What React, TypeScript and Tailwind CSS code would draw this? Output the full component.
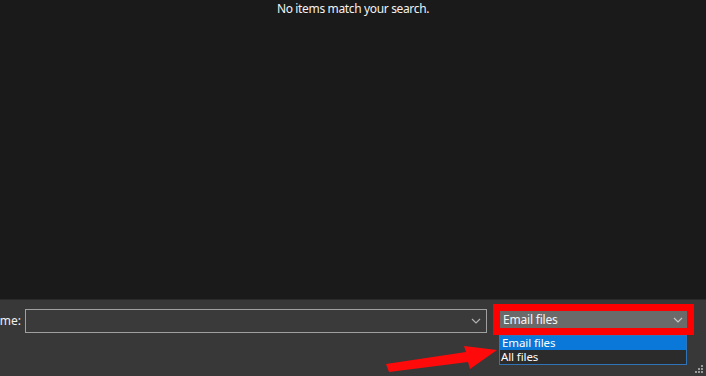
import React from "react";

const Chevron = ({ color = "#b0b0b0" }: { color?: string }) => (
  <svg width="10" height="6" viewBox="0 0 10 6" className="block">
    <polyline points="1,1 5,5 9,1" fill="none" stroke={color} strokeWidth="1.2" />
  </svg>
);

export default function App() {
  const font = { fontFamily: '"Noto Sans", "Open Sans", sans-serif' };
  return (
    <div className="relative w-[706px] h-[376px] overflow-hidden bg-[#383838] text-[12px] text-white" style={font}>
      <div className="h-[300px] bg-[#1a1a1a] border-b border-[#2a2a2a] flex justify-center">
        <div className="mt-[1px] leading-[16px] text-[12px] text-[#f2f2f2] tracking-[-0.35px]">No items match your search.</div>
      </div>
      <div className="h-[75px] flex items-start">
        <div className="mt-[9px] flex items-center h-[24px]">
          <div className="w-[21px] overflow-hidden flex justify-end">
            <span className="whitespace-nowrap text-[#f0f0f0] leading-[16px]">File name:</span>
          </div>
          <div className="ml-[4px] w-[462px] h-[24px] border border-[#a0a0a0] bg-[#3a3a3a] flex items-center justify-end pr-[5px]">
            <Chevron />
          </div>
        </div>
        <div className="relative ml-[6px] mt-[4px] w-[201px] h-[31px] border-[7px] border-[#ff0000]">
          <div className="w-full h-full bg-[#6a6a6a] flex items-center justify-between pl-[3px] pr-[4px]">
            <span className="leading-[16px] text-[#f5f5f5] tracking-[-0.2px]">Email files</span>
            <Chevron color="#c8c8c8" />
          </div>
          <div className="absolute left-[-1px] top-[24px] w-[188px] h-[30px] border border-[#2f73b8] bg-[#2b2b2b] flex flex-col">
            <div className="h-[14px] bg-[#0a78d8] flex items-center pl-[2px]">
              <span className="text-[11.5px] leading-[14px] text-white tracking-[-0.1px]">Email files</span>
            </div>
            <div className="h-[14px] flex items-center pl-[1px]">
              <span className="text-[11.5px] leading-[14px] text-white tracking-[-0.1px]">All files</span>
            </div>
          </div>
        </div>
      </div>
      <svg className="absolute left-0 top-0 pointer-events-none" width="706" height="376">
        <polygon points="386,364 466,352 464,346 497,350 470,369 468,362 389,372" fill="#ff0a0a" />
        <g fill="#9a9a9a">
          <rect x="701" y="365" width="2" height="2" />
          <rect x="698" y="368" width="2" height="2" />
          <rect x="701" y="368" width="2" height="2" />
          <rect x="695" y="371" width="2" height="2" />
          <rect x="698" y="371" width="2" height="2" />
          <rect x="701" y="371" width="2" height="2" />
        </g>
      </svg>
    </div>
  );
}
